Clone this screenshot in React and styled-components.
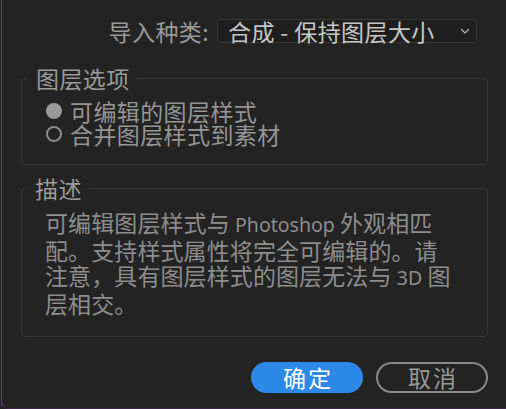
import styled, { createGlobalStyle } from 'styled-components';

const GlobalStyle = createGlobalStyle`
  html, body {
    margin: 0;
    padding: 0;
    background: #232323;
  }
  body {
    font-family: "Noto Sans CJK SC", "Noto Sans", sans-serif;
  }
`;

const Window = styled.div`
  box-sizing: border-box;
  width: 505px;
  height: 409px;
  margin-left: 1px;
  border-left: 1px solid #7d2ea6;
  border-bottom: 1px solid #3a2546;
  border-bottom-left-radius: 7px;
  background: #232323;
  padding: 19px 18px 0 19px;
  display: flex;
  flex-direction: column;
  font-size: 23px;
  letter-spacing: 0.4px;
`;

const TopRow = styled.div`
  display: flex;
  justify-content: flex-end;
  align-items: center;
  gap: 8px;
  margin-right: 11px;
`;

const Label = styled.span`
  color: #9a9a9a;
  line-height: 24px;
`;

const Select = styled.div`
  box-sizing: border-box;
  width: 260px;
  height: 24px;
  display: flex;
  align-items: center;
  justify-content: space-between;
  padding: 0 6px 0 10px;
  background: #1e1e1e;
  border: 1px solid #363636;
  border-radius: 3px;
  color: #c6c6c6;
  line-height: 22px;
`;

const Latin = styled.span`
  font-family: "Noto Sans", sans-serif;
  font-size: 19.5px;
  letter-spacing: 0;
`;

const Chevron = () => (
  <svg width="10" height="6" viewBox="0 0 10 6">
    <path d="M1 1 L5 5 L9 1" fill="none" stroke="#b8b8b8" strokeWidth="1.2" />
  </svg>
);

const Group = styled.fieldset`
  margin: ${(p) => p.$top}px 0 0 0;
  padding: 0;
  border: 1px solid #353535;
  border-radius: 4px;
  min-width: 0;
`;

const Legend = styled.legend`
  margin-left: ${(p) => p.$offset}px;
  padding: 0 7px 0 9px;
  color: #9a9a9a;
  line-height: 24px;
`;

const Options = styled.div`
  padding: 9px 24px 19px 24px;
`;

const RadioRow = styled.label`
  display: flex;
  align-items: center;
  gap: 8px;
  height: 23px;
  color: #959595;
`;

const Dot = styled.span`
  box-sizing: border-box;
  width: 16px;
  height: 16px;
  border-radius: 50%;
  flex-shrink: 0;
  background: ${(p) => (p.$checked ? '#9a9a9a' : 'transparent')};
  border: ${(p) => (p.$checked ? 'none' : '2.5px solid #8c8c8c')};
`;

const Description = styled.p`
  margin: 0;
  padding: 10px 12px 20px 23px;
  color: #8d8d8d;
  line-height: 25.5px;
  letter-spacing: 0.1px;
  white-space: nowrap;
`;

const Buttons = styled.div`
  display: flex;
  justify-content: flex-end;
  gap: 13px;
  margin-top: 25px;
`;

const Button = styled.button`
  box-sizing: border-box;
  width: 112px;
  height: 31px;
  border-radius: 16px;
  font-family: inherit;
  font-size: 23px;
  letter-spacing: 2px;
  line-height: 1;
  padding: 0 0 0 2px;
  cursor: pointer;
  background: ${(p) => (p.$primary ? '#2d89e8' : 'transparent')};
  color: ${(p) => (p.$primary ? '#ffffff' : '#999999')};
  border: ${(p) => (p.$primary ? 'none' : '2px solid #8a8a8a')};
`;

export default function App() {
  return (
    <>
      <GlobalStyle />
      <Window>
        <TopRow>
          <Label>导入种类:</Label>
          <Select>
            <span>合成 - 保持图层大小</span>
            <Chevron />
          </Select>
        </TopRow>

        <Group $top={23}>
          <Legend $offset={5}>图层选项</Legend>
          <Options>
            <RadioRow>
              <Dot $checked />
              可编辑的图层样式
            </RadioRow>
            <RadioRow>
              <Dot />
              合并图层样式到素材
            </RadioRow>
          </Options>
        </Group>

        <Group $top={11}>
          <Legend $offset={4}>描述</Legend>
          <Description>
            可编辑图层样式与 <Latin>Photoshop</Latin> 外观相匹
            <br />
            配。支持样式属性将完全可编辑的。请
            <br />
            注意，具有图层样式的图层无法与 <Latin>3D</Latin> 图
            <br />
            层相交。
          </Description>
        </Group>

        <Buttons>
          <Button $primary>确定</Button>
          <Button>取消</Button>
        </Buttons>
      </Window>
    </>
  );
}
